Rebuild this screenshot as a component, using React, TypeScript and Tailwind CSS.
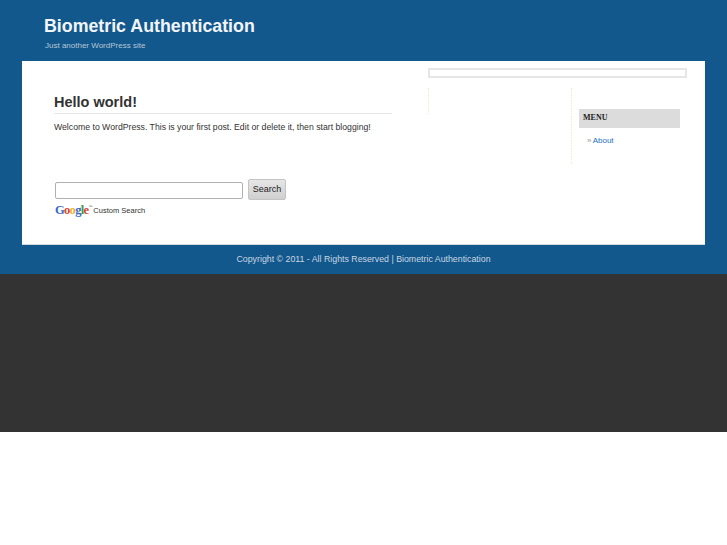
const sans = 'font-["Liberation_Sans",Arial,sans-serif]';

const GoogleMark = () => (
  <span className='font-["Liberation_Serif",serif] text-[12.5px] leading-none tracking-[-0.7px] font-bold'>
    <span className="text-[#3a68c8]">G</span>
    <span className="text-[#d9432f]">o</span>
    <span className="text-[#e8b02c]">o</span>
    <span className="text-[#3a68c8]">g</span>
    <span className="text-[#3f9e4a]">l</span>
    <span className="text-[#d9432f]">e</span>
  </span>
);

const App = () => {
  return (
    <div className={`${sans} min-h-[545px] bg-white`}>
      {/* Blue header + content wrapper */}
      <div className="h-[274px] bg-[#13588c] flex flex-col">
        <header className="h-[61px] pl-[44px] pt-[16px]">
          <h1 className="text-[17.8px] leading-[21px] font-bold text-[#f2f5f8]">Biometric Authentication</h1>
          <p className="pl-px mt-[4px] text-[8px] leading-[10px] text-[#b4c6d6]">Just another WordPress site</p>
        </header>

        <div className="mx-[22px] h-[184px] bg-white flex border-b border-[#d5d8da]">
          {/* Post column */}
          <main className="w-[370px] pl-[32px] pt-[32px] shrink-0">
            <h2 className="text-[14.5px] leading-[18px] font-bold text-[#333333] pb-[2px] border-b border-[#e6e6e6]">Hello world!</h2>
            <p className="mt-[8px] text-[8.7px] leading-[11px] text-[#333333]">
              Welcome to WordPress. This is your first post. Edit or delete it, then start blogging!
            </p>
            <div className="mt-[46px] ml-[1px] flex items-center gap-[5px]">
              <input className="w-[188px] h-[17px] mt-[1px] rounded-[2px] border border-[#b0b0b0] bg-white" />
              <button className="w-[38px] h-[21px] rounded-[2px] border border-[#c4c4c4] bg-linear-to-b from-[#e6e6e6] to-[#cfcfcf] text-[9px] text-[#222222]">
                Search
              </button>
            </div>
            <div className="ml-[1px] mt-[3px] flex items-center h-[14px]">
              <GoogleMark />
              <span className="text-[4px] leading-none text-[#555555] -translate-y-[3px]">™</span>
              <span className="text-[7.5px] leading-none ml-[1px] text-[#333333] translate-y-[1px]">Custom Search</span>
            </div>
          </main>

          {/* Sidebars */}
          <aside className="ml-[36px] w-[259px] pt-[7px] flex flex-col">
            <div className="h-[10px] border-2 border-[#e4e6e8] bg-white"></div>
            <div className="mt-[10px] flex">
              <div className="w-[143px] h-[26px] border-l border-dotted border-[#e8ecc0]"></div>
              <div className="w-[116px] h-[76px] border-l border-dotted border-[#e8ecc0] pl-[7px] pt-[21px]">
                <h3 className='w-[101px] h-[19px] pl-[4px] bg-[#dcdcdc] font-["Liberation_Serif",serif] text-[8px] leading-[18px] font-bold text-[#222222]'>
                  MENU
                </h3>
                <p className="mt-[8px] pl-[8px] text-[8px] leading-[10px] text-[#999999]">
                  » <a className="text-[#2270c4] -ml-px">About</a>
                </p>
              </div>
            </div>
          </aside>
        </div>

        <footer className="h-[29px] flex items-center justify-center text-[8.8px] text-[#c9d6e2]">
          Copyright © 2011 - All Rights Reserved | Biometric Authentication
        </footer>
      </div>

      {/* Dark band */}
      <div className="h-[158px] bg-[#333333]"></div>
    </div>
  );
};

export default App;
